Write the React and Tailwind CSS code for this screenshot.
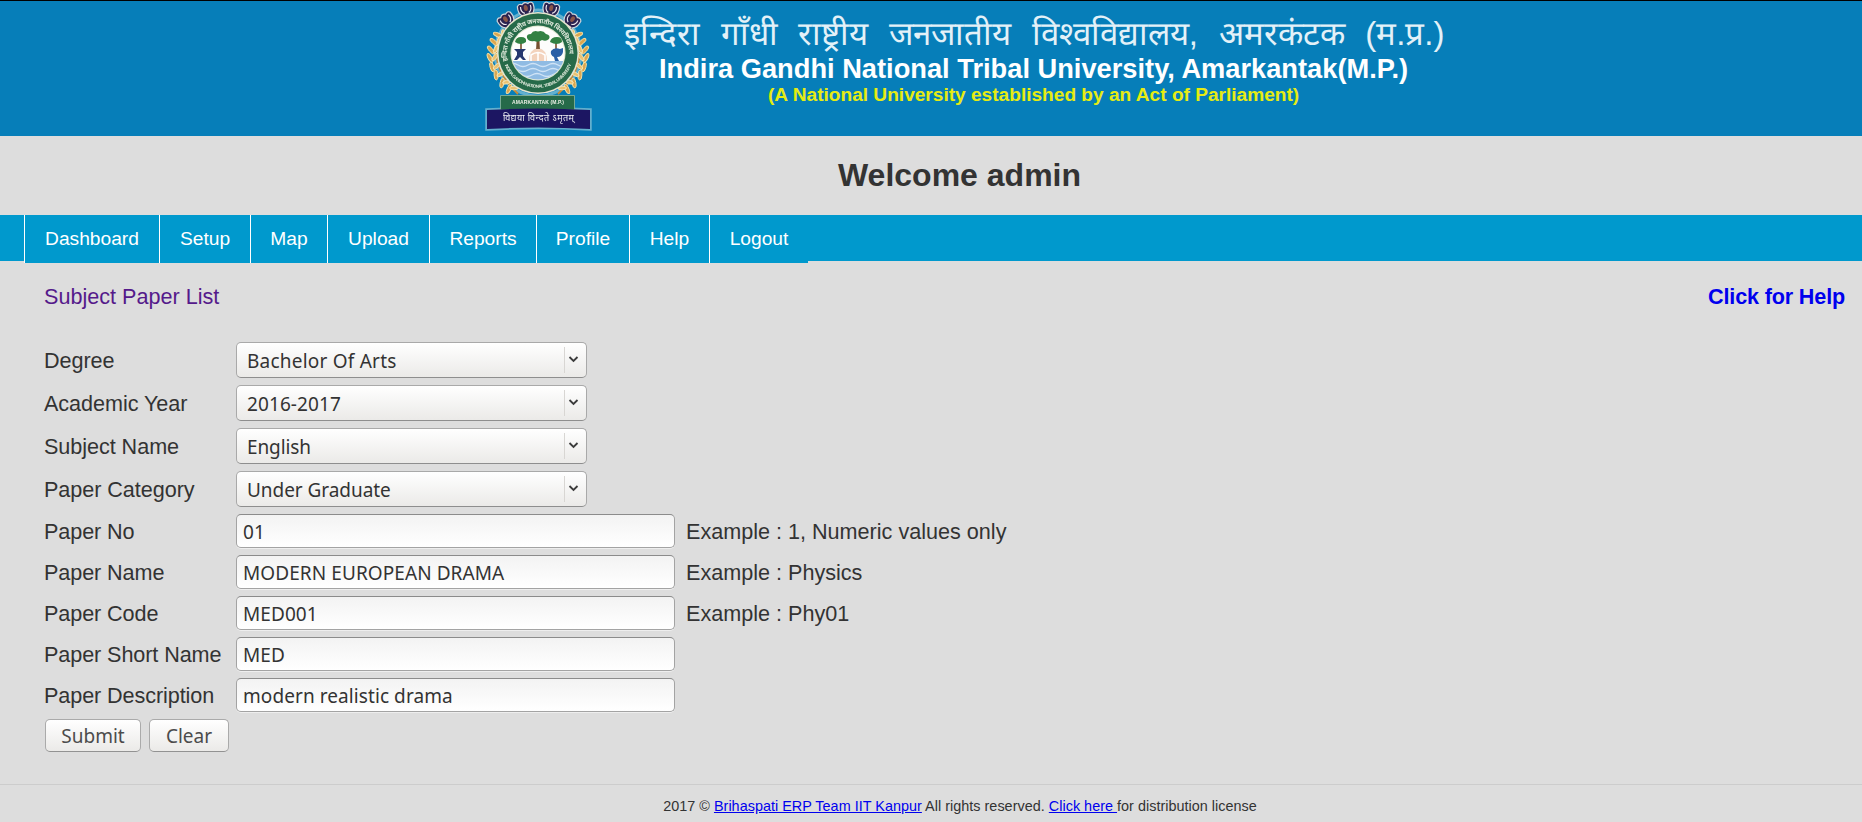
import React from "react";

const menu = [
  ["Dashboard", "w-[135px]"],
  ["Setup", "w-[91px]"],
  ["Map", "w-[77px]"],
  ["Upload", "w-[102px]"],
  ["Reports", "w-[107px]"],
  ["Profile", "w-[93px]"],
  ["Help", "w-[80px]"],
  ["Logout", "w-[99px]"],
];

const selects = [
  ["Degree", "Bachelor Of Arts", "tracking-[0.22px]"],
  ["Academic Year", "2016-2017", "tracking-[0.1px]"],
  ["Subject Name", "English", "tracking-[-0.1px]"],
  ["Paper Category", "Under Graduate", "tracking-[-0.05px]"],
];

const inputs = [
  ["Paper No", "01", "Example : 1, Numeric values only"],
  ["Paper Name", "MODERN EUROPEAN DRAMA", "Example : Physics"],
  ["Paper Code", "MED001", "Example : Phy01"],
  ["Paper Short Name", "MED", ""],
  ["Paper Description", "modern realistic drama", ""],
];

function Figure({ x, y, r }) {
  return (
    <g transform={`translate(${x} ${y}) rotate(${r})`}>
      <path d="M-8 -4Q-9 3 -5 6L-5 9H5L5 6Q9 3 8 -4Q6 -7 3 -5Q0 -8 -3 -5Q-6 -7 -8 -4Z" fill="#2c2350" stroke="#cfd6dc" strokeWidth="1.200" />
      <path d="M-5 -3Q-6 2 -2 4M5 -3Q6 2 2 4" stroke="#e9e4ea" strokeWidth="1.200" fill="none" />
      <ellipse cx="0" cy="-1" rx="2" ry="3" fill="#8a5648" />
      <path d="M-4 7H4" stroke="#eadfd0" strokeWidth="1.800" />
    </g>
  );
}

const leaves = [
  [31, 36, 60], [27, 43, 75], [24, 51, 85], [23, 59, 95], [25, 68, 110], [29, 76, 122], [35, 84, 135], [42, 90, 150],
];

function Wheat() {
  return (
    <g>
      <path d="M30 36Q18 65 48 94" fill="none" stroke="#c98a35" strokeWidth="2" />
      {leaves.map(([x, y, d], i) => (
        <g key={i}>
          <ellipse cx={x - 3} cy={y - 1} rx="5" ry="1.900" transform={`rotate(${d - 35} ${x - 3} ${y - 1})`} fill="#dba650" stroke="#f6e3a8" strokeWidth=".9" />
          <ellipse cx={x + 2} cy={y - 2} rx="4.500" ry="1.800" transform={`rotate(${d + 30} ${x + 2} ${y - 2})`} fill="#eac273" stroke="#fbedc0" strokeWidth=".8" />
        </g>
      ))}
    </g>
  );
}

function Emblem() {
  return (
    <svg className="block h-[135px] w-[140px] shrink-0" viewBox="0 1 140 135">
      <defs>
        <filter id="soft" x="-10%" y="-10%" width="120%" height="120%">
          <feGaussianBlur stdDeviation="0.65" />
        </filter>
        <clipPath id="scene"><circle cx="68" cy="53" r="26.500" /></clipPath>
        <path id="arcTop" d="M37.500 61A31.200 31.200 0 1 1 98.500 61" />
        <path id="arcBottom" d="M34.500 64A35.500 35.500 0 0 0 101.500 64" />
      </defs>
      <g filter="url(#soft)">
        <path d="M17 110Q68 107 120 110V129Q68 126 17 129Z" fill="none" stroke="#63b0ce" strokeWidth="3.500" />
        <circle cx="68" cy="53" r="43" fill="none" stroke="#63b0ce" strokeWidth="3" />
        <Wheat />
        <g transform="translate(136 0) scale(-1 1)"><Wheat /></g>
        <Figure x={36} y={20} r={-35} />
        <Figure x={56} y={9} r={-12} />
        <Figure x={81} y={9} r={12} />
        <Figure x={102} y={20} r={35} />
        <circle cx="68" cy="53" r="41" fill="#e5e4cf" />
        <circle cx="68" cy="53" r="39.500" fill="#286b49" />
        <circle cx="68" cy="53" r="27.600" fill="#dfe7d0" />
        <g clipPath="url(#scene)">
          <rect x="38" y="24" width="60" height="60" fill="#fdfdfb" />
          <path d="M38 61H98V84H38Z" fill="#8fbbe3" />
          <path d="M38 65q5-3 10 0t10 0t10 0t10 0t10 0t10 0M38 70q5-3 10 0t10 0t10 0t10 0t10 0t10 0M42 75q5-3 10 0t10 0t10 0t10 0t10 0" fill="none" stroke="#cfe3f6" strokeWidth="1.300" />
          <path d="M59 61Q59 49 68 48Q77 49 77 61Z" fill="#f3d3bd" />
          <path d="M61 61V55Q68 50 75 55V61M68 52V61" fill="none" stroke="#fff" strokeWidth="1.600" />
        </g>
        <path d="M67 49L67.500 40L62 36M69 49L68.500 40L73 36" stroke="#76502f" strokeWidth="1.800" fill="none" />
        <path d="M51 50V43M86 50V43" stroke="#76502f" strokeWidth="1.600" />
        <path d="M57 38Q56 34 61 34Q63 30 68 31.500Q73 30 76 34Q81 35 79 39Q76 42 72 40Q68 43 64 41Q59 42 57 38Z" fill="#328143" />
        <path d="M45 42Q46 37 51 37Q57 37 56 42Q51 46 45 42ZM80 42Q81 37 87 37Q92 37 92 42Q87 46 80 42Z" fill="#328143" />
        <path d="M44 49H56L53 52V56L56 60H53L50 57L47 60H44L47 55V52Z" fill="#28386e" />
        <path d="M81 51Q84 47 90 49L93 48V52Q92 57 87 57L89 61H85L84 57Q80 55 81 51Z" fill="#295fa5" />
        <text fill="#dfe9dc" className="font-['Noto_Sans','Liberation_Sans',sans-serif] text-[6.500px] font-bold">
          <textPath href="#arcTop" textLength="104">इन्दिरा गाँधी राष्ट्रीय जनजातीय विश्वविद्यालय</textPath>
        </text>
        <text fill="#dfe9dc" className="font-['Liberation_Sans',sans-serif] text-[4.500px] font-bold">
          <textPath href="#arcBottom" startOffset="1" textLength="86">INDIRA GANDHI NATIONAL TRIBAL UNIVERSITY</textPath>
        </text>
        <path d="M30.500 95.500H104.500V110H30.500Z" fill="#286b49" stroke="#8fb79b" strokeWidth=".8" />
        <text x="42" y="103.800" textLength="52" fill="#e9eee4" className="font-['Liberation_Sans',sans-serif] text-[5px] font-bold">AMARKANTAK (M.P.)</text>
        <path d="M17 110Q68 107 120 110V129Q68 126 17 129Z" fill="#1a1762" />
        <text x="33" y="120.500" textLength="71" fill="#f0f0f4" className="font-['Noto_Sans','Liberation_Sans',sans-serif] text-[9px]">विद्यया विन्दते ऽमृतम्</text>
      </g>
    </svg>
  );
}

function Banner() {
  return (
    <header className="flex h-[136px] overflow-hidden border-t border-black bg-[#067eb9] pl-[470px]">
      <Emblem />
      <div className="flex flex-col whitespace-nowrap pl-[14px] pt-[10px] text-white">
        <div className="h-[44px] text-[33px] leading-[46px] text-[#e3f1f8] [word-spacing:11.5px]">इन्दिरा गाँधी राष्ट्रीय जनजातीय विश्वविद्यालय, अमरकंटक (म.प्र.)</div>
        <div className="pl-[35px] text-[27.250px] leading-[28px] font-bold">Indira Gandhi National Tribal University, Amarkantak(M.P.)</div>
        <div className="pl-[144px] pt-[2px] text-[19.100px] leading-[20px] font-bold text-[#e6ec12]">(A National University established by an Act of Parliament)</div>
      </div>
    </header>
  );
}

export default function App() {
  return (
    <div className="flex h-[822px] w-[1862px] flex-col overflow-hidden bg-[#ddd] font-['Liberation_Sans',Arial,sans-serif] text-[#333]">
      <Banner />
      <h1 className="h-[79px] pl-[57px] pt-[21px] text-center text-[32px] leading-[37px] font-bold">Welcome admin</h1>
      <nav className="h-[46px] shrink-0 bg-[#0099cd] pl-[24px]">
        <ul className="flex h-[48px] w-max bg-[#0099cd]">
          {menu.map(([m, w]) => (
            <li key={m} className={`${w} border-l border-white text-center text-[19.200px] leading-[48px] text-white`}>{m}</li>
          ))}
        </ul>
      </nav>
      <div className="flex h-[81px] justify-between pl-[44px] pr-[17px] pt-[21px] text-[21.600px] leading-[30px]">
        <a className="text-[#551a8b]">Subject Paper List</a>
        <a className="font-bold tracking-[-0.160px] text-[#00e]">Click for Help</a>
      </div>
      <main className="flex h-[442px] flex-col pl-[44px] text-[21.600px]">
        {selects.map(([label, value, tracking]) => (
          <div key={label} className="flex h-[43px] items-start">
            <label className="w-[192px] leading-[37px] tracking-[-0.050px]">{label}</label>
            <div className="flex h-[36px] w-[351px] items-center justify-between rounded-[5px] border border-[#a9a9a9] border-b-[#8e8e8e] bg-gradient-to-b from-white to-[#ebeae8] pl-[10px] font-['Noto_Sans',sans-serif] text-[19px]">
              <span className={`pt-[2px] ${tracking}`}>{value}</span>
              <span className="flex h-[26px] w-[22px] items-center border-l border-[#d8d6d3] pl-[3px]">
                <svg className="mb-[3px] h-[10px] w-[11px]" viewBox="0 0 11 10"><path d="M1.500 3L5.500 7L9.500 3" fill="none" stroke="#3c3c3c" strokeWidth="1.800" /></svg>
              </span>
            </div>
          </div>
        ))}
        {inputs.map(([label, value, hint]) => (
          <div key={label} className="flex h-[41px] items-start">
            <label className="w-[192px] whitespace-nowrap leading-[35px] tracking-[-0.090px]">{label}</label>
            <div className="h-[34px] w-[439px] rounded-[5px] border border-[#a3a3a3] border-t-[#8b8b8b] bg-gradient-to-b from-[#f3f3f3] to-white pl-[6px] font-['Noto_Sans',sans-serif] text-[19px] leading-[34px] tracking-[0.080px] shadow-[0_1px_0_#eee]">
              {value}
            </div>
            <span className="pl-[11px] leading-[35px]">{hint}</span>
          </div>
        ))}
        <div className="flex gap-[8px] pl-px font-['Noto_Sans',sans-serif] text-[19px] leading-[32px] text-[#4c4c4c]">
          <button className="h-[33px] w-[96px] rounded-[5px] border border-[#aaa] border-b-[#929292] bg-gradient-to-b from-white to-[#ebeae8]">Submit</button>
          <button className="h-[33px] w-[80px] rounded-[5px] border border-[#aaa] border-b-[#929292] bg-gradient-to-b from-white to-[#ebeae8]">Clear</button>
        </div>
      </main>
      <footer className="h-[38px] border-t border-[#ccc] pl-[58px] text-center text-[14.400px] leading-[43px] tracking-[0.025px]">
        2017 © <a className="text-[#00e] underline">Brihaspati ERP Team IIT Kanpur</a> All rights reserved. <a className="text-[#00e] underline">Click here </a>for distribution license
      </footer>
    </div>
  );
}
